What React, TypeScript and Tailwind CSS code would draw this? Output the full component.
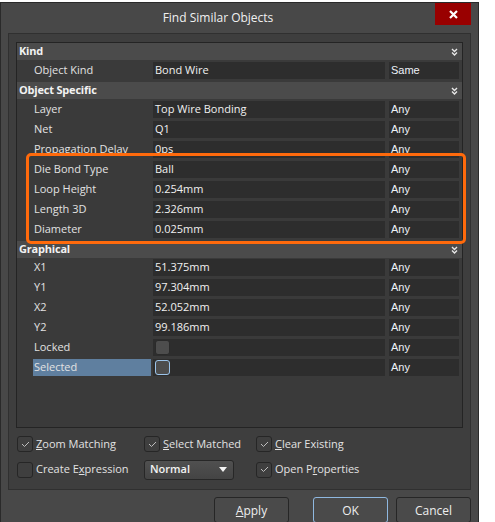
import React from "react";

type Row =
  | { type: "header"; label: string; short?: boolean }
  | {
      type: "data";
      label: string;
      value?: string;
      match: string;
      check?: boolean;
      selected?: boolean;
    };

const rows: Row[] = [
  { type: "header", label: "Kind" },
  { type: "data", label: "Object Kind", value: "Bond Wire", match: "Same" },
  { type: "header", label: "Object Specific" },
  { type: "data", label: "Layer", value: "Top Wire Bonding", match: "Any" },
  { type: "data", label: "Net", value: "Q1", match: "Any" },
  { type: "data", label: "Propagation Delay", value: "0ps", match: "Any" },
  { type: "data", label: "Die Bond Type", value: "Ball", match: "Any" },
  { type: "data", label: "Loop Height", value: "0.254mm", match: "Any" },
  { type: "data", label: "Length 3D", value: "2.326mm", match: "Any" },
  { type: "data", label: "Diameter", value: "0.025mm", match: "Any" },
  { type: "header", label: "Graphical", short: true },
  { type: "data", label: "X1", value: "51.375mm", match: "Any" },
  { type: "data", label: "Y1", value: "97.304mm", match: "Any" },
  { type: "data", label: "X2", value: "52.052mm", match: "Any" },
  { type: "data", label: "Y2", value: "99.186mm", match: "Any" },
  { type: "data", label: "Locked", check: true, match: "Any" },
  { type: "data", label: "Selected", check: true, selected: true, match: "Any" },
];

function Chevrons() {
  return (
    <svg width="7" height="8" viewBox="0 0 7 8" className="mr-[4px]">
      <polyline points="1,1 3.5,3.5 6,1" fill="none" stroke="#e8e8e8" strokeWidth="1.4" />
      <polyline points="1,4.5 3.5,7 6,4.5" fill="none" stroke="#e8e8e8" strokeWidth="1.4" />
    </svg>
  );
}

function CheckBox({ checked }: { checked?: boolean }) {
  return (
    <div className="flex h-[16px] w-[16px] items-center justify-center rounded-[3px] border border-[#262626] bg-[#3f3f3f]">
      {checked && (
        <svg width="9" height="7" viewBox="0 0 9 7">
          <polyline points="1,3 3.5,5.5 8,1" fill="none" stroke="#bdbdbd" strokeWidth="1" />
        </svg>
      )}
    </div>
  );
}

function GridRow({ row }: { row: Row }) {
  if (row.type === "header") {
    return (
      <div className={row.short ? "h-[18px]" : "h-[19px]"}>
        <div className="flex h-[17px] items-center justify-between bg-[#4b4b4b] pl-[2px] text-[11px] font-bold tracking-[-0.2px] text-[#f2f2f2]">
          <span>{row.label}</span>
          <Chevrons />
        </div>
      </div>
    );
  }
  return (
    <div className="flex h-[20px]">
      <div
        className={`ml-[16px] flex h-[17px] w-[118px] items-center pl-[1px] text-[11px] text-[#e2e2e2] ${
          row.selected ? "bg-[#5f7f9f]" : ""
        }`}
      >
        {row.label}
      </div>
      <div className="ml-[2px] flex h-[17px] w-[232px] items-center bg-[#2d2d2d] pl-[2px] text-[11px] text-[#f0f0f0]">
        {row.check ? (
          <div
            className={`h-[15px] w-[15px] rounded-[3px] border bg-[#4d4d4d] ${
              row.selected ? "border-[#9cc4ea]" : "border-[#2a2a2a]"
            }`}
          />
        ) : (
          row.value
        )}
      </div>
      <div className="ml-[4px] flex h-[17px] w-[70px] items-center bg-[#2d2d2d] pl-[2px] font-['Liberation_Sans',sans-serif] text-[11px] text-[#eef2f8]">
        {row.match}
      </div>
    </div>
  );
}

function Button({ children, focused }: { children: React.ReactNode; focused?: boolean }) {
  return (
    <div
      className={`flex h-[26px] w-[75px] items-start justify-center rounded-[3px] border bg-[#4a4a4a] pt-[4px] text-[12px] text-[#eeeeee] ${
        focused ? "border-[#8fb8e0]" : "border-[#262626]"
      }`}
    >
      {children}
    </div>
  );
}

export default function App() {
  return (
    <div className="relative h-[522px] w-[495px] overflow-hidden bg-white pt-[2px] font-['Open_Sans','Noto_Sans',sans-serif]">
      <div className="h-[540px] w-[479px] border border-[#2a2a2a] bg-[#484848]">
        {/* title bar */}
        <div className="flex h-[30px] items-start">
          <div className="flex-1 pt-[6px] text-center text-[12px] text-[#f0f0f0]">Find Similar Objects</div>
          <div className="mr-[7px] flex h-[22px] w-[36px] items-center justify-center bg-[#990000]">
            <svg width="9" height="9" viewBox="0 0 9 9">
              <path d="M1 1 L8 8 M8 1 L1 8" stroke="#ffffff" strokeWidth="2.2" />
            </svg>
          </div>
        </div>

        {/* content panel */}
        <div className="ml-[7px] h-[457px] w-[463px] border border-[#303030] bg-[#3e3e3e] pl-[7px] pt-[8px]">
          <div className="h-[386px] w-[447px] border border-[#242424] bg-[#3a3a3a]">
            {rows.map((r, i) => (
              <GridRow key={i} row={r} />
            ))}
          </div>

          <div className="mt-[8px] flex flex-col gap-[7px] text-[11px] text-[#e2e2e2]">
            <div className="flex items-center">
              <div className="flex w-[128px] items-center gap-[3px] pl-[1px]">
                <CheckBox checked />
                <span>
                  <span className="underline">Z</span>oom Matching
                </span>
              </div>
              <div className="flex w-[112px] items-center gap-[3px]">
                <CheckBox checked />
                <span>
                  <span className="underline">S</span>elect Matched
                </span>
              </div>
              <div className="flex items-center gap-[3px]">
                <CheckBox checked />
                <span>
                  <span className="underline">C</span>lear Existing
                </span>
              </div>
            </div>
            <div className="flex items-center">
              <div className="flex w-[128px] items-center gap-[3px] pl-[1px]">
                <CheckBox />
                <span>
                  Create E<span className="underline">x</span>pression
                </span>
              </div>
              <div className="w-[112px]">
                <div className="flex h-[20px] w-[90px] items-center justify-between rounded-[3px] border border-[#272727] bg-gradient-to-b from-[#505050] to-[#444444] pl-[5px] pr-[6px] text-[11px] font-semibold text-[#f2f2f2]">
                  <span>Normal</span>
                  <svg width="8" height="5" viewBox="0 0 8 5">
                    <polygon points="0,0 8,0 4,5" fill="#f2f2f2" />
                  </svg>
                </div>
              </div>
              <div className="flex items-center gap-[3px]">
                <CheckBox checked />
                <span>
                  Open P<span className="underline">r</span>operties
                </span>
              </div>
            </div>
          </div>
        </div>

        {/* buttons */}
        <div className="mt-[7px] flex justify-end pr-[7px]">
          <Button>
            <span>
              <span className="underline">A</span>pply
            </span>
          </Button>
          <div className="ml-[24px]">
            <Button focused>OK</Button>
          </div>
          <div className="ml-[8px]">
            <Button>Cancel</Button>
          </div>
        </div>
      </div>

      {/* annotation highlight */}
      <div className="absolute left-[26px] top-[153px] h-[91px] w-[440px] rounded-[5px] border-[3px] border-[#ff6a0c]" />
    </div>
  );
}
